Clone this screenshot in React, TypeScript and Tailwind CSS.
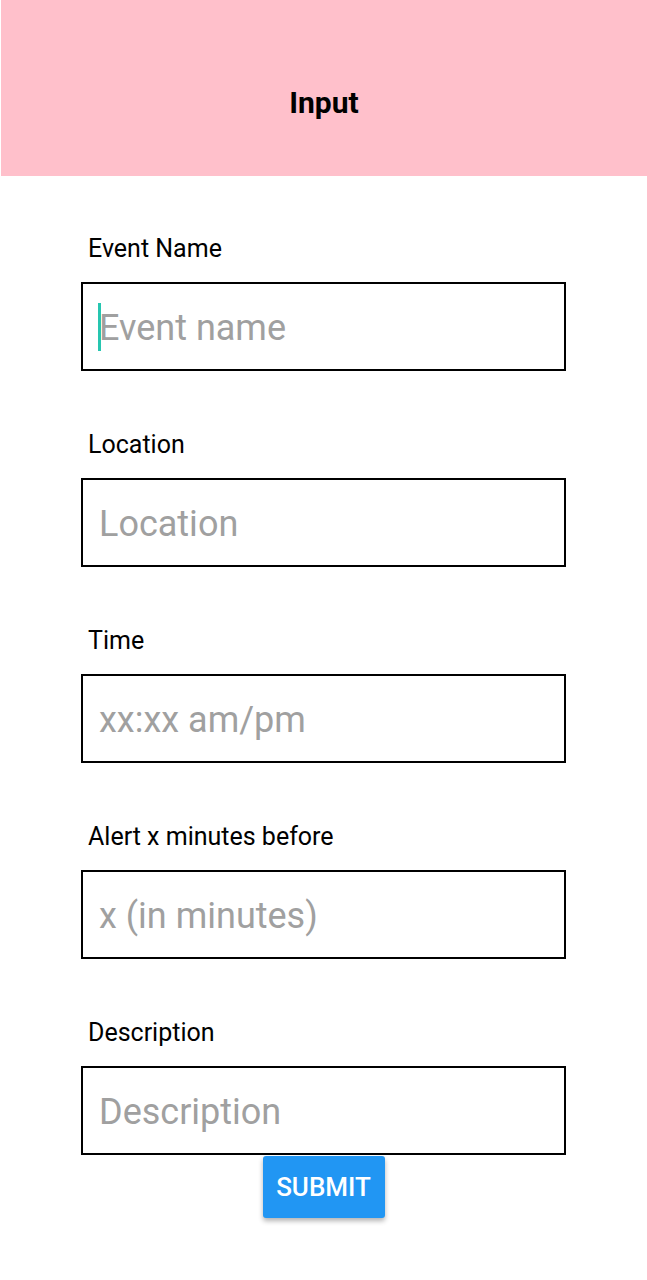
import { useState } from "react";

const fields = [
  { label: "Event Name", placeholder: "Event name" },
  { label: "Location", placeholder: "Location" },
  { label: "Time", placeholder: "xx:xx am/pm" },
  { label: "Alert x minutes before", placeholder: "x (in minutes)" },
  { label: "Description", placeholder: "Description" },
];

const App = () => {
  const [values, setValues] = useState<string[]>(fields.map(() => ""));

  return (
    <div className="min-h-screen bg-white font-['Roboto',sans-serif]">
      <div className="h-[176px] ml-px bg-[#ffc0cb] flex items-center justify-center pt-[30px]">
        <h1 className="text-[30px] leading-none font-bold text-black">Input</h1>
      </div>

      <div className="pl-[81px] pr-[81px] pt-[59px]">
        {fields.map((f, i) => (
          <div key={f.label} className={i > 0 ? "mt-[60px]" : ""}>
            <label className="block pl-[7px] text-[25px] leading-[28px] text-black">{f.label}</label>
            <div className="relative mt-[19px]">
              <input
                type="text"
                className="w-full h-[89px] border-2 border-black pl-[16px] pt-[3px] text-[36px] text-black placeholder:text-[#a0a0a0] outline-none"
                placeholder={f.placeholder}
                value={values[i]}
                onChange={(e) => {
                  const next = [...values];
                  next[i] = e.target.value;
                  setValues(next);
                }}
              />
              {i === 0 && values[0] === "" && (
                <span className="absolute left-[17px] top-[21px] w-[3px] h-[48px] bg-[#26c6b0]" />
              )}
            </div>
          </div>
        ))}
      </div>

      <div className="flex justify-center mt-px">
        <button
          type="button"
          className="w-[122px] h-[62px] bg-[#2196f3] text-white text-[26px] font-medium rounded-[3px] shadow-[0_3px_5px_rgba(0,0,0,0.3)]"
        >
          SUBMIT
        </button>
      </div>
    </div>
  );
};

export default App;
